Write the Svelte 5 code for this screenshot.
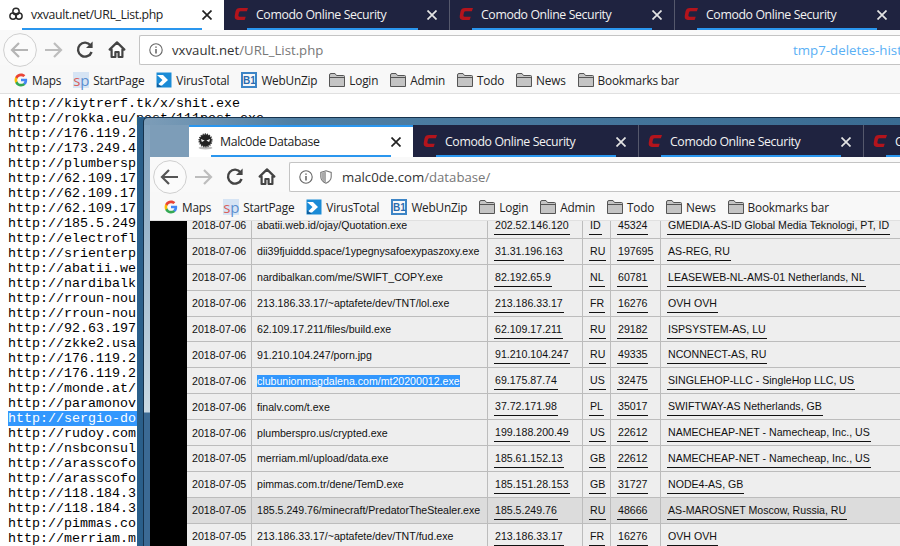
<script>
	const bookmarks = [
		{ icon: 'g', label: 'Maps' },
		{ icon: 'sp', label: 'StartPage' },
		{ icon: 'vt', label: 'VirusTotal' },
		{ icon: 'b1', label: 'WebUnZip' },
		{ icon: 'folder', label: 'Login' },
		{ icon: 'folder', label: 'Admin' },
		{ icon: 'folder', label: 'Todo' },
		{ icon: 'folder', label: 'News' },
		{ icon: 'folder', label: 'Bookmarks bar' }
	];

	const comodo = { icon: 'comodo', title: 'Comodo Online Security' };

	const urls = [
		'http://kiytrerf.tk/x/shit.exe',
		'http://rokka.eu/post/111post.exe',
		'http://176.119.2',
		'http://173.249.4',
		'http://plumbersp',
		'http://62.109.17',
		'http://62.109.17',
		'http://62.109.17',
		'http://185.5.249',
		'http://electrofl',
		'http://srienterp',
		'http://abatii.we',
		'http://nardibalk',
		'http://rroun-nou',
		'http://rroun-nou',
		'http://92.63.197',
		'http://zkke2.usa',
		'http://176.119.2',
		'http://176.119.2',
		'http://monde.at/',
		'http://paramonov',
		'http://sergio-do',
		'http://rudoy.com',
		'http://nsbconsul',
		'http://arasscofo',
		'http://arasscofo',
		'http://118.184.3',
		'http://118.184.3',
		'http://pimmas.co',
		'http://merriam.m'
	];

	const rows = [
		['2018-07-06', 'abatii.web.id/ojay/Quotation.exe', '202.52.146.120', 'ID', '45324', 'GMEDIA-AS-ID Global Media Teknologi, PT, ID'],
		['2018-07-06', 'dii39fjuiddd.space/1ypegnysafoexypaszoxy.exe', '31.31.196.163', 'RU', '197695', 'AS-REG, RU'],
		['2018-07-06', 'nardibalkan.com/me/SWIFT_COPY.exe', '82.192.65.9', 'NL', '60781', 'LEASEWEB-NL-AMS-01 Netherlands, NL'],
		['2018-07-06', '213.186.33.17/~aptafete/dev/TNT/lol.exe', '213.186.33.17', 'FR', '16276', 'OVH OVH'],
		['2018-07-06', '62.109.17.211/files/build.exe', '62.109.17.211', 'RU', '29182', 'ISPSYSTEM-AS, LU'],
		['2018-07-06', '91.210.104.247/porn.jpg', '91.210.104.247', 'RU', '49335', 'NCONNECT-AS, RU'],
		['2018-07-06', 'clubunionmagdalena.com/mt20200012.exe', '69.175.87.74', 'US', '32475', 'SINGLEHOP-LLC - SingleHop LLC, US'],
		['2018-07-06', 'finalv.com/t.exe', '37.72.171.98', 'PL', '35017', 'SWIFTWAY-AS Netherlands, GB'],
		['2018-07-06', 'plumberspro.us/crypted.exe', '199.188.200.49', 'US', '22612', 'NAMECHEAP-NET - Namecheap, Inc., US'],
		['2018-07-05', 'merriam.ml/upload/data.exe', '185.61.152.13', 'GB', '22612', 'NAMECHEAP-NET - Namecheap, Inc., US'],
		['2018-07-05', 'pimmas.com.tr/dene/TemD.exe', '185.151.28.153', 'GB', '31727', 'NODE4-AS, GB'],
		['2018-07-05', '185.5.249.76/minecraft/PredatorTheStealer.exe', '185.5.249.76', 'RU', '48666', 'AS-MAROSNET Moscow, Russia, RU'],
		['2018-07-05', '213.186.33.17/~aptafete/dev/TNT/fud.exe', '213.186.33.17', 'FR', '16276', 'OVH OVH']
	];
</script>

{#snippet favicon(kind)}
	{#if kind === 'bio'}
		<svg class="fav" viewBox="0 0 16 16" fill="none" stroke="#2b2b2b" stroke-width="1.7">
			<circle cx="8" cy="5" r="3.6" />
			<circle cx="4.6" cy="10.4" r="3.6" />
			<circle cx="11.4" cy="10.4" r="3.6" />
			<circle cx="8" cy="8.6" r="1.5" fill="#2b2b2b" stroke="none" />
		</svg>
	{:else if kind === 'malc'}
		<svg class="fav big" viewBox="0 0 16 16">
			<ellipse cx="8" cy="14" rx="6.5" ry="1.5" fill="#bdbdbd" />
			<circle cx="8" cy="7" r="5.8" fill="#222" stroke="#333" stroke-width="1.8" stroke-dasharray="1 1" />
			<path d="M3.6 5.6 L7.2 7 L4.6 8.4 Z M12.4 5.6 L8.8 7 L11.4 8.4 Z" fill="#eee" />
		</svg>
	{:else}
		<svg class="fav" viewBox="0 1 15 13.4">
			<path d="M15 1.4 H6.4 Q2.4 1.4 1.6 5 L0.8 9.6 Q0.2 14 4 14 H11.4 L12.6 10.6 H6 Q4.4 10.6 4.7 9 L5.3 6.4 Q5.6 4.8 7.2 4.8 H13.8 Z" fill="#b3141c" />
		</svg>
	{/if}
{/snippet}

{#snippet tab(t, active, short, first)}
	<div class="tab" class:active class:short class:first>
		<span class="tab-icon">{@render favicon(t.icon)}</span>
		<span class="tab-title">{t.title}</span>
		<svg class="tab-x" viewBox="0 0 10 10"><path d="M0.5 0.5 L9.5 9.5 M9.5 0.5 L0.5 9.5" /></svg>
	</div>
{/snippet}

{#snippet bookmarkIcon(icon)}
	{#if icon === 'g'}
		<svg class="bm-icon g" viewBox="0 0 48 48">
			<path fill="#4285F4" d="M45.12 24.5c0-1.56-.14-3.06-.4-4.5H24v8.51h11.84c-.51 2.75-2.06 5.08-4.39 6.64v5.52h7.11c4.16-3.83 6.56-9.47 6.56-16.17z" />
			<path fill="#34A853" d="M24 46c5.94 0 10.92-1.97 14.56-5.33l-7.11-5.52c-1.97 1.32-4.49 2.1-7.45 2.1-5.73 0-10.58-3.87-12.31-9.07H4.34v5.7C7.96 41.07 15.4 46 24 46z" />
			<path fill="#FBBC05" d="M11.69 28.18C11.25 26.86 11 25.45 11 24s.25-2.86.69-4.18v-5.7H4.34C2.85 17.09 2 20.45 2 24c0 3.55.85 6.91 2.34 9.88l7.35-5.7z" />
			<path fill="#EA4335" d="M24 10.75c3.23 0 6.13 1.11 8.41 3.29l6.31-6.31C34.91 4.18 29.93 2 24 2 15.4 2 7.96 6.93 4.34 14.12l7.35 5.7c1.73-5.2 6.58-9.07 12.31-9.07z" />
		</svg>
	{:else if icon === 'sp'}
		<span class="bm-icon sp"><span class="sp-s">s</span><span class="sp-p">p</span></span>
	{:else if icon === 'vt'}
		<svg class="bm-icon" viewBox="0 0 16 16">
			<rect x="0.5" y="0.5" width="15" height="15" fill="#1b8bd6" />
			<path d="M1 3 H7 L12 8 L6 13.5 H1 L6.5 8 Z" fill="#fff" />
			<path d="M1 15 L6 15 L1 11 Z" fill="#0f5f9e" />
		</svg>
	{:else if icon === 'b1'}
		<span class="bm-icon b1">B1</span>
	{:else}
		<svg class="bm-icon" viewBox="0 0 16 16">
			<path d="M0.5 3 Q0.5 1.5 2 1.5 H6 L7.5 3.5 H14.5 Q15.5 3.5 15.5 4.5 V14.5 H0.5 Z" fill="#c4c4c4" stroke="#555" />
			<path d="M0.5 5.5 H15.5" stroke="#555" fill="none" />
		</svg>
	{/if}
{/snippet}

{#snippet chrome(tabs, host, path, ext, lead, backOn, shield)}
	<div class="tabbar" class:lead>
		{#each tabs as t, i}
			{@render tab(t, i === 0, !lead && i === 1, i === 1)}
		{/each}
	</div>
	<div class="toolbar">
		<button class="nav back" class:on={backOn} aria-label="Back">
			<svg viewBox="0 0 34 34">
				<circle cx="17" cy="17" r="16.4" fill="#fbfbfb" stroke="#cfcfcf" />
				<path d="M25 17 H9.5 M16 10 L9 17 L16 24" fill="none" stroke-width="2.2" />
			</svg>
		</button>
		<button class="nav forward" aria-label="Forward">
			<svg viewBox="0 0 32 34"><path d="M8 17 H23.5 M17 10 L24 17 L17 24" fill="none" stroke="#bdbdbd" stroke-width="2.2" /></svg>
		</button>
		<button class="nav" aria-label="Reload">
			<svg viewBox="0 0 32 34">
				<path d="M21.6 12.4 A7 7 0 1 0 22.6 19" fill="none" stroke="#444" stroke-width="2.4" />
				<path d="M23.6 8.4 V15 H17 Z" fill="#444" />
			</svg>
		</button>
		<button class="nav" aria-label="Home">
			<svg viewBox="0 0 32 34">
				<path d="M16 9.4 L8.6 16.6 H10.6 V24 H14.4 V19 H17.6 V24 H21.4 V16.6 H23.4 Z" fill="#fff" stroke="#444" stroke-width="2.2" stroke-linejoin="round" />
			</svg>
		</button>
		<div class="address">
			<svg class="info" viewBox="0 0 14 14">
				<circle cx="7" cy="7" r="6.2" fill="none" stroke="#666" stroke-width="1.1" />
				<path d="M7 6 V10.6 M7 3.4 V4.8" stroke="#555" stroke-width="1.4" />
			</svg>
			{#if shield}
				<svg class="shield" viewBox="0 0 12 14">
					<path d="M6 0.8 L11.2 2.4 V7 Q11 11 6 13.2 Q1 11 0.8 7 V2.4 Z" fill="#fff" stroke="#777" stroke-width="1.1" />
					<path d="M6 1.4 V12.6 Q1.6 10.6 1.4 7 V2.8 Z" fill="#aaa" />
				</svg>
			{/if}
			<span class="host">{host}</span><span class="path">{path}</span>
			<span class="ext">{ext}</span>
		</div>
	</div>
	<div class="bookmarks">
		{#each bookmarks as b}
			<div class="bm">
				{@render bookmarkIcon(b.icon)}
				<span>{b.label}</span>
			</div>
		{/each}
	</div>
{/snippet}

<div class="screen">
	<div class="back-window">
		{@render chrome([{ icon: 'bio', title: 'vxvault.net/URL_List.php' }, comodo, comodo, comodo], 'vxvault.net', '/URL_List.php', 'tmp7-deletes-history', false, false, false)}
		<div class="url-list">
			{#each urls as u, i}
				<div class="line" class:selected={i === 21}>{u}</div>
			{/each}
		</div>
	</div>

	<div class="front-window">
		<div class="frame">
			{@render chrome([{ icon: 'malc', title: 'Malc0de Database' }, comodo, comodo, comodo], 'malc0de.com', '/database/', 'tmp4-deletes-history', true, true, true)}
			<div class="page">
				<div class="black"></div>
				<div class="table">
					{#each rows as r, i}
						<div class="row" class:hot={i === 11}>
							<div class="cell">{r[0]}</div>
							<div class="cell"><span class:picked={i === 6}>{r[1]}</span></div>
							{#each r.slice(2) as v}
								<div class="cell link"><a href="#top">{v}</a></div>
							{/each}
						</div>
					{/each}
				</div>
			</div>
		</div>
	</div>
</div>

<style>
	:global(body) {
		margin: 0;
		overflow: hidden;
	}
	.screen {
		position: relative;
		width: 900px;
		height: 546px;
		overflow: hidden;
		background: #fff;
		font-family: "Open Sans", "Noto Sans", sans-serif;
	}

	/* tabs */
	.back-window {
		margin-top: -2px;
	}
	.tabbar {
		display: flex;
		height: 32px;
		overflow: hidden;
		background: #1f2340;
	}
	.tabbar.lead {
		padding-left: 39px;
		background: linear-gradient(90deg, #7d9db8 39px, #1f2340 39px);
	}
	.tab {
		position: relative;
		display: flex;
		align-items: center;
		flex: none;
		box-sizing: border-box;
		width: 225px;
		height: 32px;
		padding-left: 10px;
		color: #f2f2f2;
		box-shadow: inset 1px 0 0 #55586c;
		font-size: 12.3px;
		letter-spacing: -0.38px;
	}
	.tab.first {
		box-shadow: none;
	}
	.tab.active {
		width: 224px;
		padding-left: 9px;
		background: #fff;
		color: #222;
		box-shadow: inset 0 2px 0 #2a96ee;
	}
	.tab::after {
		content: "";
		position: absolute;
		left: 23px;
		bottom: 0;
		width: 180px;
		height: 2px;
		background: #2a96ee;
	}
	.tab.active::after {
		left: 22px;
	}
	.tab.short::after {
		width: 171px;
	}
	.tab-icon {
		display: flex;
		align-items: center;
		width: 22px;
		flex: none;
	}
	.fav {
		width: 14px;
		height: 14px;
	}
	.fav.big {
		width: 17px;
		height: 17px;
		flex: none;
		margin-left: -1px;
	}
	.tab-title {
		flex: 1;
		white-space: nowrap;
	}
	.tab-x {
		position: absolute;
		left: 203px;
		top: 12px;
		width: 10px;
		height: 10px;
		fill: none;
		stroke: #e4e4e4;
		stroke-width: 1.7;
	}
	.tab.active .tab-x {
		left: 202px;
		stroke: #222;
	}

	/* toolbar */
	.toolbar {
		display: flex;
		align-items: flex-start;
		box-sizing: border-box;
		height: 35px;
		padding: 3px 0 0 3px;
		background: #f9f9f9;
	}
	.nav {
		flex: none;
		width: 32px;
		height: 34px;
		padding: 0;
		border: 0;
		background: none;
	}
	.nav svg {
		display: block;
		width: 100%;
		height: 100%;
	}
	.back {
		width: 34px;
	}
	.back path {
		stroke: #b5b5b5;
	}
	.back.on path {
		stroke: #555;
	}
	.address {
		display: flex;
		align-items: center;
		box-sizing: border-box;
		flex: 1;
		min-width: 0;
		height: 30px;
		margin: 2px 0 0 6px;
		padding-left: 9px;
		overflow: hidden;
		white-space: nowrap;
		background: #fff;
		border: 1px solid #c4c4c4;
		border-right: 0;
		border-radius: 2px 0 0 2px;
		font-size: 13.2px;
	}
	.info {
		flex: none;
		width: 14px;
		height: 14px;
		margin-right: 9px;
	}
	.shield {
		flex: none;
		width: 12px;
		height: 14px;
		margin: 0 10px 0 -2px;
	}
	.host {
		color: #333;
	}
	.path {
		color: #777;
	}
	.ext {
		position: absolute;
		left: 793px;
		color: #5ab0f5;
		font-size: 13.3px;
	}
	.front-window .ext {
		left: 863px;
	}

	/* bookmarks */
	.bookmarks {
		display: flex;
		align-items: center;
		gap: 12px;
		box-sizing: border-box;
		height: 29px;
		padding: 2px 0 0 14px;
		background: #f8f8f8;
		border-bottom: 1px solid #e0e0e0;
		color: #222;
		font-size: 11.8px;
		letter-spacing: -0.2px;
		white-space: nowrap;
	}
	.bm {
		display: flex;
		align-items: center;
		gap: 4px;
	}
	.bm-icon {
		flex: none;
		width: 16px;
		height: 16px;
	}
	.bm-icon.g {
		width: 14px;
		height: 14px;
	}
	.sp {
		display: flex;
		justify-content: center;
		align-items: center;
		background: #d6e4f4;
		font-size: 15px;
		line-height: 14px;
	}
	.sp-s {
		color: #d9605c;
	}
	.sp-p {
		color: #5b8fd0;
	}
	.b1 {
		display: flex;
		justify-content: center;
		align-items: center;
		box-sizing: border-box;
		border: 2px solid #3d85c6;
		color: #2b6cb0;
		font: bold 10px "Liberation Sans", sans-serif;
		letter-spacing: 0;
	}

	/* plain text list behind */
	.url-list {
		padding: 2px 0 0 8px;
		font: 13.33px/15px "Liberation Mono", monospace;
		color: #000;
		white-space: pre;
	}
	.selected {
		background: #3297fd;
		color: #fff;
	}

	/* front window, free on the desktop */
	.front-window {
		position: absolute;
		left: 137px;
		top: 117px;
		right: 0;
		bottom: 0;
		background: #2a5f8a;
	}
	.frame {
		box-sizing: border-box;
		height: 100%;
		margin-left: 6px;
		padding: 7px 0 0 6px;
		border-left: 1px solid #16324c;
		border-top: 1px solid #16324c;
		border-top-left-radius: 5px;
		background:
			linear-gradient(90deg, #7d9db8, #4f7fa4 20%, #3a6b92) top / 100% 7px no-repeat,
			linear-gradient(180deg, #7fa0bc, #c9d9e3 294px, #3b6a94 295px);
	}
	.page {
		display: flex;
		height: 326px;
		overflow: hidden;
	}
	.black {
		flex: none;
		width: 37px;
		background: #000;
	}
	.table {
		flex: 1;
		margin-top: -8px;
		background: #eee;
		font: 10.6px "Liberation Sans", Arial, sans-serif;
		color: #111;
	}
	.row {
		display: grid;
		grid-template-columns: 65px 236px 95px 28px 50px 1fr;
		box-sizing: border-box;
		height: 25.9px;
		border-bottom: 1px solid #bcbcbc;
	}
	.row.hot {
		background: #dcdcdc;
	}
	.cell {
		display: flex;
		align-items: center;
		box-sizing: border-box;
		padding-left: 5px;
		border-right: 1px solid #bcbcbc;
		white-space: nowrap;
	}
	.cell:last-child {
		border-right: 0;
	}
	.link {
		padding-left: 6px;
	}
	.link a {
		margin-top: 3px;
		padding: 0 1px 2px;
		color: #111;
		text-decoration: none;
		border-bottom: 1px solid #111;
		line-height: 13px;
	}
	.picked {
		background: #3297fd;
		color: #fff;
	}
</style>
